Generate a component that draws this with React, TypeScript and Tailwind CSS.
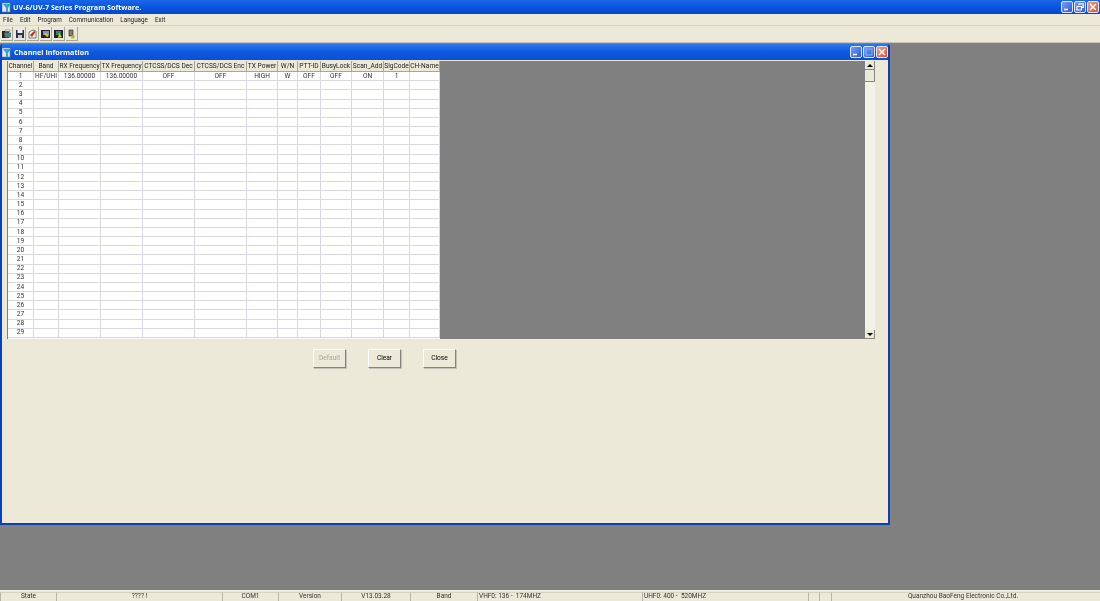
const F = { fontFamily: 'Roboto, "Liberation Sans", Arial, sans-serif' };
const B = { fontFamily: '"Open Sans", "Liberation Sans", Arial, sans-serif' };

const cols = [
  ['Channel', 26], ['Band', 25], ['RX Frequency', 42], ['TX Frequency', 42], ['CTCSS/DCS Dec', 52], ['CTCSS/DCS Enc', 52],
  ['TX Power', 31], ['W/N', 20], ['PTT-ID', 23], ['BusyLock', 31], ['Scan_Add', 32], ['SigCode', 26], ['CH-Name', 30],
] as const;
const first = ['1', 'HF/UHI', '136.00000', '136.00000', 'OFF', 'OFF', 'HIGH', 'W', 'OFF', 'OFF', 'ON', '1', ''];
const rows = Array.from({ length: 29 }, (_, i) => i + 1);

function WinBtn({ kind, small }: { kind: 'min' | 'max' | 'restore' | 'close'; small?: boolean }) {
  const bg = kind === 'close' ? 'bg-gradient-to-br from-[#e8a088] to-[#d4502c]' : 'bg-gradient-to-br from-[#7c9cf0] to-[#2a58d8]';
  return (
    <div className={`flex h-[12px] w-[12px] items-center justify-center rounded-[2px] border border-[#dfe7ff] ${bg}`}>
      <svg width="10" height="10" viewBox="0 0 10 10" fill="none" stroke="#fff" strokeWidth="1.2">
        {kind === 'min' && <path d="M2 7.5h4" strokeWidth="1.6" />}
        {kind === 'max' && <rect x="2" y="2" width="6" height="6" stroke={small ? '#8ea6ec' : '#fff'} />}
        {kind === 'restore' && <path d="M2 4.5h4.5v3.5H2zM4 3V1.8h4.2v3.6H7" />}
        {kind === 'close' && <path d="M2 2l6 6M8 2l-6 6" strokeWidth="1.5" />}
      </svg>
    </div>
  );
}

function AppIcon() {
  return (
    <svg width="10" height="11" viewBox="0 0 10 11">
      <rect x="0" y="1" width="8" height="9" fill="#dfe8f2" stroke="#5a7fa8" strokeWidth="0.6" />
      <path d="M1 2h8L6 6v4H4V6z" fill="#3aa8b8" />
    </svg>
  );
}

function Tool({ children }: { children: React.ReactNode }) {
  return <div className="flex h-[14px] w-[12px] items-center justify-center border-r border-b border-[#a8a698] bg-[#ece9d8]">{children}</div>;
}

function Btn({ label, disabled }: { label: string; disabled?: boolean }) {
  return (
    <div className={`flex h-[19px] w-[33px] items-center justify-center border border-t-white border-l-white border-r-[#85837a] border-b-[#85837a] shadow-[1px_1px_0_#c4c2b6] text-[6.6px] ${disabled ? 'text-[#aaa89c]' : 'text-black'}`}>
      {label}
    </div>
  );
}

function Status({ w, children, left, grow }: { w?: number; children?: React.ReactNode; left?: boolean; grow?: boolean }) {
  return (
    <div
      className={`flex h-[9px] shrink-0 items-center overflow-hidden whitespace-nowrap border-l border-t border-l-[#b8b6a6] border-t-[#d6d3c2] text-[6.5px] text-[#333] ${left ? 'justify-start pl-[1px]' : 'justify-center'} ${grow ? 'grow pr-[6px]' : ''}`}
      style={w ? { width: w } : undefined}
    >
      {children}
    </div>
  );
}

export default function App() {
  return (
    <div className="flex h-[601px] w-[1100px] flex-col overflow-hidden bg-[#808080] blur-[0.35px]" style={F}>
      <div className="flex h-[14px] shrink-0 items-center bg-gradient-to-b from-[#1a66e8] via-[#0a54e0] to-[#0648c8] pl-[2px] pr-[1px]">
        <AppIcon />
        <span className="ml-[1px] pt-[1px] text-[7.2px] font-bold text-white" style={B}>UV-6/UV-7 Series Program Software.</span>
        <div className="ml-auto flex gap-[1px]">
          <WinBtn kind="min" />
          <WinBtn kind="restore" />
          <WinBtn kind="close" />
        </div>
      </div>

      <div className="flex h-[12px] shrink-0 items-center gap-[7px] border-b border-[#d8d5c4] bg-[#ece9d8] pl-[3px] pt-[3px] text-[6.3px] text-[#222]">
        <span>File</span><span>Edit</span><span>Program</span><span>Communication</span><span>Language</span><span>Exit</span>
      </div>

      <div className="flex h-[17px] shrink-0 items-center gap-[1px] border-b border-[#c8c5b4] bg-[#ece9d8] pl-[1px]">
        <Tool><svg width="10" height="10" viewBox="0 0 10 10"><path d="M0 2h7v7H0z" fill="#222" /><path d="M2 3.5h7v5H3z" fill="#4f7f80" /><path d="M3 1h5v1.5H3z" fill="#fff" stroke="#333" strokeWidth=".4" /></svg></Tool>
        <Tool><svg width="10" height="10" viewBox="0 0 10 10"><path d="M1 1h8v8H1z" fill="#303050" /><path d="M2.5 1h5v3h-5z" fill="#eee" /><path d="M3 6h4v3H3z" fill="#c8c8c8" /></svg></Tool>
        <Tool><svg width="10" height="10" viewBox="0 0 10 10"><path d="M1 9V3l4-2 3 1v7z" fill="#f4f0e0" stroke="#333" strokeWidth=".6" /><path d="M2 6l4-4 1.5 1L4 8z" fill="#c03028" /></svg></Tool>
        <Tool><svg width="10" height="10" viewBox="0 0 10 10"><path d="M0 1h9v8H0z" fill="#20203a" /><path d="M2 2h6v4H2z" fill="#7a9ab0" /><path d="M3 5l3 3 2-1-3-3z" fill="#d8c820" /></svg></Tool>
        <Tool><svg width="10" height="10" viewBox="0 0 10 10"><path d="M0 1h9v8H0z" fill="#20203a" /><path d="M2 2h5v4H2z" fill="#3a8a50" /><path d="M5 4l3 4-4 1z" fill="#d8c820" /></svg></Tool>
        <Tool><svg width="10" height="10" viewBox="0 0 10 10"><path d="M2 1h4v6H2z" fill="#80806c" stroke="#222" strokeWidth=".6" /><path d="M5 6l3 1-1 2.5H4z" fill="#c8a838" /></svg></Tool>
      </div>

      <div className="relative min-h-0 grow">
        <div className="mt-[1px] flex h-[481px] w-[890px] flex-col rounded-t-[3px] bg-[#0c40b4] pb-[2px] pl-[2px] pr-[2px]">
          <div className="flex h-[16px] shrink-0 items-center bg-gradient-to-b from-[#2a78f0] via-[#0e58e0] to-[#0a50d4]">
            <AppIcon />
            <span className="ml-[2px] pt-[1px] text-[7.2px] font-bold text-white" style={B}>Channel Information</span>
            <div className="ml-auto flex gap-[1px]">
              <WinBtn kind="min" small />
              <WinBtn kind="max" small />
              <WinBtn kind="close" small />
            </div>
          </div>

          <div className="flex min-h-0 grow flex-col bg-[#ece9d8] pl-[5px]">
            <div className="mt-[1px] flex h-[278px] w-[868px] shrink-0 overflow-hidden border-l border-[#808080]">
              <div className="w-[432px] shrink-0 overflow-hidden bg-white">
                <div className="flex h-[11px] border-b border-[#a8a698] bg-[#ece9d8]">
                  {cols.map(([h, w]) => (
                    <div key={h} className="flex shrink-0 items-center justify-center overflow-hidden whitespace-nowrap border-r border-[#a8a698] pt-[1px] text-[6.6px] text-[#222]" style={{ width: w }}>
                      {h}
                    </div>
                  ))}
                </div>
                {rows.map(r => (
                  <div key={r} className="flex h-[9.18px] border-b border-[#d8d8e0]">
                    {cols.map(([h, w], i) => (
                      <div key={h} className="flex shrink-0 items-center justify-center whitespace-nowrap border-r border-[#d8d8e0] pt-[1px] text-[6.6px] text-[#333]" style={{ width: w }}>
                        {i === 0 ? r : r === 1 ? first[i] : ''}
                      </div>
                    ))}
                  </div>
                ))}
              </div>
              <div className="grow bg-[#808080]" />
              <div className="flex w-[10px] shrink-0 flex-col bg-[#f4f2e8]">
                <div className="flex h-[9px] items-center justify-center border-r border-b border-[#8a887c] bg-[#ece9d8]"><div className="h-0 w-0 border-x-[3px] border-b-[3px] border-x-transparent border-b-black" /></div>
                <div className="h-[12px] border-r border-b border-[#8a887c] bg-[#ece9d8]" />
                <div className="grow" />
                <div className="flex h-[9px] items-center justify-center border-r border-b border-[#8a887c] bg-[#ece9d8]"><div className="h-0 w-0 border-x-[3px] border-t-[3px] border-x-transparent border-t-black" /></div>
              </div>
            </div>
            <div className="ml-[306px] mt-[10px] flex gap-[22px]">
              <Btn label="Default" disabled />
              <Btn label="Clear" />
              <Btn label="Close" />
            </div>
          </div>
        </div>
      </div>

      <div className="flex h-[11px] shrink-0 items-end border-t border-[#f4f2e8] bg-[#ece9d8]">
        <Status w={56}>State</Status>
        <Status w={166}>???? !</Status>
        <Status w={56}>COM1</Status>
        <Status w={63}>Version</Status>
        <Status w={69}>V13.03.28</Status>
        <Status w={67}>Band</Status>
        <Status w={165} left>VHF0: 136 -&nbsp;&nbsp;174MHZ</Status>
        <Status w={166} left>UHF0: 400 -&nbsp;&nbsp;520MHZ</Status>
        <Status w={11} />
        <Status w={12} />
        <Status grow>Quanzhou BaoFeng Electronic Co.,Ltd.</Status>
      </div>
    </div>
  );
}
